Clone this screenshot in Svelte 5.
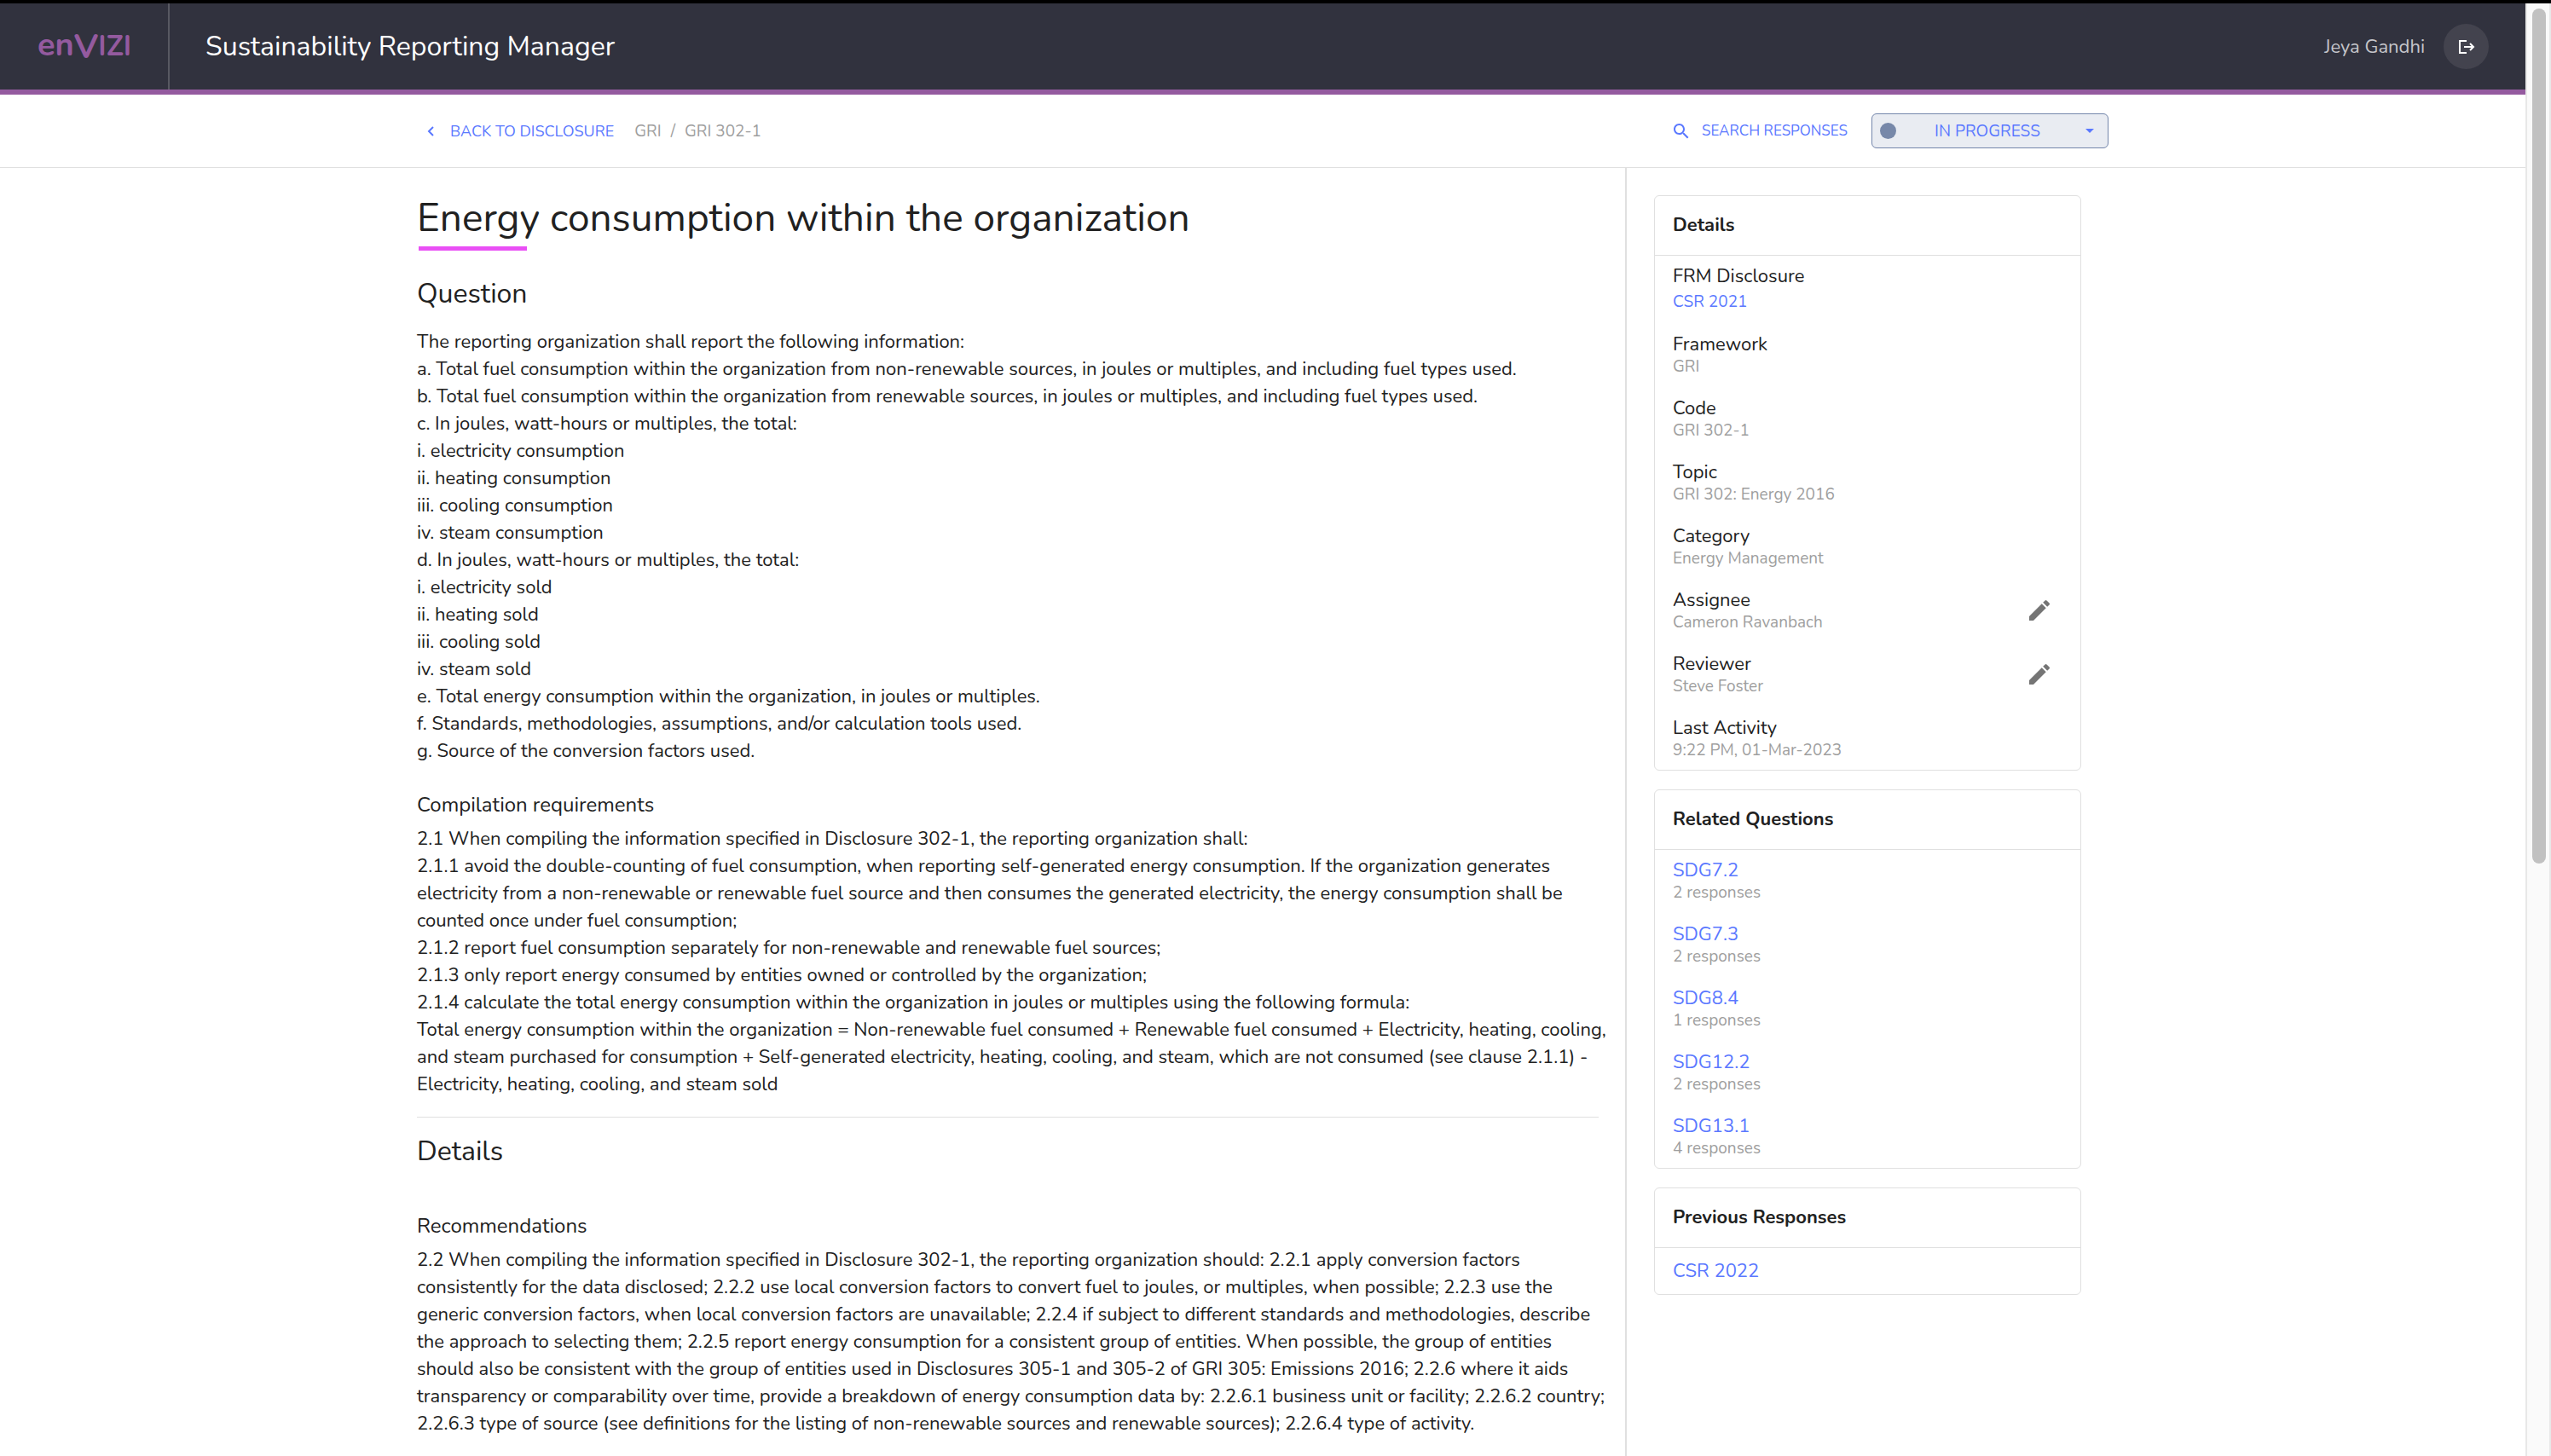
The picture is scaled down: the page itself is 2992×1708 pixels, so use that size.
<script>
  const question = `The reporting organization shall report the following information:
a. Total fuel consumption within the organization from non-renewable sources, in joules or multiples, and including fuel types used.
b. Total fuel consumption within the organization from renewable sources, in joules or multiples, and including fuel types used.
c. In joules, watt-hours or multiples, the total:
i. electricity consumption
ii. heating consumption
iii. cooling consumption
iv. steam consumption
d. In joules, watt-hours or multiples, the total:
i. electricity sold
ii. heating sold
iii. cooling sold
iv. steam sold
e. Total energy consumption within the organization, in joules or multiples.
f. Standards, methodologies, assumptions, and/or calculation tools used.
g. Source of the conversion factors used.`;

  const compilation = `2.1 When compiling the information specified in Disclosure 302-1, the reporting organization shall:
2.1.1 avoid the double-counting of fuel consumption, when reporting self-generated energy consumption. If the organization generates
electricity from a non-renewable or renewable fuel source and then consumes the generated electricity, the energy consumption shall be
counted once under fuel consumption;
2.1.2 report fuel consumption separately for non-renewable and renewable fuel sources;
2.1.3 only report energy consumed by entities owned or controlled by the organization;
2.1.4 calculate the total energy consumption within the organization in joules or multiples using the following formula:
Total energy consumption within the organization = Non-renewable fuel consumed + Renewable fuel consumed + Electricity, heating, cooling,
and steam purchased for consumption + Self-generated electricity, heating, cooling, and steam, which are not consumed (see clause 2.1.1) -
Electricity, heating, cooling, and steam sold`;

  const recommendations = `2.2 When compiling the information specified in Disclosure 302-1, the reporting organization should: 2.2.1 apply conversion factors
consistently for the data disclosed; 2.2.2 use local conversion factors to convert fuel to joules, or multiples, when possible; 2.2.3 use the
generic conversion factors, when local conversion factors are unavailable; 2.2.4 if subject to different standards and methodologies, describe
the approach to selecting them; 2.2.5 report energy consumption for a consistent group of entities. When possible, the group of entities
should also be consistent with the group of entities used in Disclosures 305-1 and 305-2 of GRI 305: Emissions 2016; 2.2.6 where it aids
transparency or comparability over time, provide a breakdown of energy consumption data by: 2.2.6.1 business unit or facility; 2.2.6.2 country;
2.2.6.3 type of source (see definitions for the listing of non-renewable sources and renewable sources); 2.2.6.4 type of activity.`;

  const details = [
    { label: 'FRM Disclosure', value: 'CSR 2021', link: true },
    { label: 'Framework', value: 'GRI' },
    { label: 'Code', value: 'GRI 302-1' },
    { label: 'Topic', value: 'GRI 302: Energy 2016' },
    { label: 'Category', value: 'Energy Management' },
    { label: 'Assignee', value: 'Cameron Ravanbach', editable: true },
    { label: 'Reviewer', value: 'Steve Foster', editable: true },
    { label: 'Last Activity', value: '9:22 PM, 01-Mar-2023' },
  ];

  const related = [
    { code: 'SDG7.2', count: 2 },
    { code: 'SDG7.3', count: 2 },
    { code: 'SDG8.4', count: 1 },
    { code: 'SDG12.2', count: 2 },
    { code: 'SDG13.1', count: 4 },
  ];

  let status = $state('IN PROGRESS');
</script>

<div class="app">
  <div class="frame">
    <div class="page">
      <header class="topbar">
        <a class="logo" href="#home" aria-label="Envizi home"><span class="lower">en</span><span class="vee">V</span><span class="caps">IZI</span></a>
        <span class="product">Sustainability Reporting Manager</span>
        <span class="user">Jeya Gandhi</span>
        <button class="logout" aria-label="Log out">
          <svg viewBox="0 0 20 20" width="20" height="20" fill="none" stroke="#fff" stroke-width="2">
            <path d="M10 3H2v14h8" />
            <path d="M7 10h11M14 6l4 4-4 4" />
          </svg>
        </button>
      </header>

      <div class="subbar">
        <div class="wrap actions">
          <a class="back" href="#disclosure">
            <svg viewBox="0 0 10 14" width="10" height="14" fill="none" stroke="currentColor" stroke-width="2"><path d="M8 2L3 7l5 5" /></svg>
            BACK TO DISCLOSURE
          </a>
          <nav class="crumbs" aria-label="Breadcrumb">
            <a href="#gri">GRI</a><span>/</span><a href="#gri-302-1">GRI 302-1</a>
          </nav>
          <button class="search">
            <svg viewBox="3 3 18 18" width="18" height="18" fill="currentColor"><path d="M15.5 14h-.79l-.28-.27C15.41 12.59 16 11.11 16 9.5 16 5.91 13.09 3 9.5 3S3 5.91 3 9.5 5.91 16 9.5 16c1.61 0 3.09-.59 4.23-1.57l.27.28v.79l5 4.99L20.49 19l-4.99-5zm-6 0C7.01 14 5 11.99 5 9.5S7.01 5 9.5 5 14 7.01 14 9.5 11.99 14 9.5 14z" /></svg>
            SEARCH RESPONSES
          </button>
          <div class="status">
            <span class="dot"></span>
            <select bind:value={status} aria-label="Status">
              <option>IN PROGRESS</option>
              <option>COMPLETE</option>
            </select>
            <svg class="caret" viewBox="0 0 10 5" width="10" height="5" fill="currentColor"><path d="M0 0h10L5 5z" /></svg>
          </div>
        </div>
      </div>

      <div class="wrap columns">
        <main>
          <h1>Energy consumption within the organization</h1>
          <h2>Question</h2>
          <p>{question}</p>
          <h3>Compilation requirements</h3>
          <p>{compilation}</p>
          <hr />
          <h2>Details</h2>
          <h3>Recommendations</h3>
          <p>{recommendations}</p>
        </main>

        <aside>
          <section>
            <h4>Details</h4>
            <dl>
              {#each details as item}
                <div class="item" class:linked={item.link}>
                  <dt>{item.label}</dt>
                  <dd>{#if item.link}<a href="#csr-2021">{item.value}</a>{:else}{item.value}{/if}</dd>
                  {#if item.editable}
                    <button class="edit" aria-label={`Edit ${item.label}`}>
                      <svg viewBox="0 0 24 24" width="32" height="32" fill="currentColor"><path d="M3 17.25V21h3.75L17.81 9.94l-3.75-3.75L3 17.25zM20.71 7.04c.39-.39.39-1.02 0-1.41l-2.34-2.34a.9959.9959 0 0 0-1.41 0l-1.83 1.83 3.75 3.75 1.83-1.83z" /></svg>
                    </button>
                  {/if}
                </div>
              {/each}
            </dl>
          </section>
          <section>
            <h4>Related Questions</h4>
            <ul>
              {#each related as item}
                <li class="item"><a class="code" href={`#${item.code}`}>{item.code}</a><span class="count">{item.count} responses</span></li>
              {/each}
            </ul>
          </section>
          <section>
            <h4>Previous Responses</h4>
            <a class="code single" href="#csr-2022">CSR 2022</a>
          </section>
        </aside>
      </div>
    </div>
    <div class="scrollbar" aria-hidden="true"><div class="thumb"></div></div>
  </div>
</div>

<style>
  :global(body) {
    margin: 0;
    overflow: hidden;
  }
  .app {
    box-sizing: border-box;
    height: 100vh;
    border-top: 4px solid #000;
    background: #fff;
    color: #212121;
    font-family: Nunito, Lato, sans-serif;
    font-size: 22px;
    line-height: 32px;
    overflow: hidden;
  }
  .frame {
    display: flex;
    height: 100%;
  }
  .page {
    flex: 1;
    min-width: 0;
    display: flex;
    flex-direction: column;
    overflow: hidden;
  }
  a {
    color: #5a78ff;
    text-decoration: none;
  }
  button {
    border: 0;
    padding: 0;
    background: none;
    font: inherit;
    cursor: pointer;
  }
  svg {
    display: block;
    flex: none;
  }
  h1, h2, h3, h4, p, dl, dd, ul {
    margin: 0;
    padding: 0;
    font-weight: 400;
  }
  ul {
    list-style: none;
  }

  .topbar {
    flex: none;
    display: flex;
    align-items: center;
    height: 101px;
    border-bottom: 6px solid #945a9f;
    background: #31323e;
    color: #fff;
  }
  .logo {
    box-sizing: border-box;
    display: flex;
    align-items: center;
    align-self: stretch;
    width: 199px;
    padding-left: 44px;
    border-right: 2px solid #585962;
    color: #945a9f;
    font-weight: 700;
    white-space: nowrap;
  }
  .lower {
    padding-bottom: 4px;
    font-size: 38px;
  }
  .vee {
    font-size: 40px;
  }
  .caps {
    font-size: 33px;
  }
  .product {
    margin-left: 42px;
    font-size: 32px;
  }
  .user {
    margin-left: auto;
    color: #c5c5ca;
    font-size: 22px;
  }
  .logout {
    display: grid;
    place-items: center;
    width: 53px;
    height: 53px;
    margin: 0 43px 0 22px;
    border-radius: 50%;
    background: #43434e;
  }

  .wrap {
    box-sizing: border-box;
    width: 100%;
    max-width: 1984px;
    margin: 0 auto;
  }
  .subbar {
    flex: none;
    border-bottom: 1px solid #e0e0e0;
  }
  .actions {
    display: flex;
    align-items: center;
    height: 85px;
    font-size: 19px;
  }
  .back {
    display: flex;
    align-items: center;
    gap: 18px;
    padding-left: 11px;
    font-size: 18px;
  }
  .crumbs {
    display: flex;
    gap: 11px;
    margin-left: 24px;
    color: #9e9e9e;
  }
  .crumbs a {
    color: inherit;
  }
  .search {
    display: flex;
    align-items: center;
    gap: 15px;
    margin-left: auto;
    color: #5a78ff;
    font-size: 17px;
  }
  .status {
    position: relative;
    width: 278px;
    margin-left: 28px;
    color: #5a78ff;
  }
  select {
    box-sizing: border-box;
    display: block;
    width: 100%;
    height: 41px;
    padding: 0 28px 0 22px;
    appearance: none;
    border: 1px solid #7486ab;
    border-radius: 6px;
    background: #e9ecf2;
    color: inherit;
    font: inherit;
    text-align: center;
    text-align-last: center;
  }
  .dot {
    position: absolute;
    left: 10px;
    top: 11px;
    width: 19px;
    height: 19px;
    border-radius: 50%;
    background: #7788a9;
  }
  .caret {
    position: absolute;
    right: 17px;
    top: 18px;
  }

  .columns {
    flex: 1;
    min-height: 0;
    display: flex;
  }
  main {
    flex: 1;
    min-width: 0;
    padding: 27px 16px 0 0;
    border-right: 2px solid #e0e0e0;
  }
  h1 {
    position: relative;
    padding-bottom: 6px;
    font-size: 46px;
    line-height: 64px;
  }
  h1::after {
    content: "";
    position: absolute;
    left: 2px;
    bottom: 0;
    width: 127px;
    height: 5px;
    background: #e94ff5;
  }
  h2 {
    padding: 27px 0 16px;
    font-size: 32px;
    line-height: 48px;
  }
  hr + h2 {
    padding-top: 16px;
  }
  h3 {
    padding: 27px 0 4px;
    font-size: 24px;
    line-height: 40px;
  }
  p {
    white-space: pre-line;
  }
  hr {
    height: 1px;
    margin: 22px 15px 0 0;
    border: 0;
    background: #e0e0e0;
  }

  aside {
    display: flex;
    flex-direction: column;
    gap: 22px;
    width: 501px;
    padding: 32px 32px 0 32px;
  }
  section {
    border: 1px solid #e0e0e0;
    border-radius: 6px;
  }
  h4 {
    padding: 0 21px;
    border-bottom: 1px solid #e0e0e0;
    font-size: 22px;
    font-weight: 700;
    line-height: 69px;
  }
  dl, ul {
    padding: 9px 21px 5px;
  }
  .item {
    position: relative;
    height: 59px;
    margin-bottom: 16px;
    line-height: 30px;
  }
  .item:last-child {
    margin-bottom: 0;
  }
  .linked {
    height: 64px;
  }
  dt, .code {
    display: block;
    font-size: 22px;
    line-height: 30px;
  }
  dd, .count {
    display: block;
    color: #9e9e9e;
    font-size: 19px;
    line-height: 22px;
  }
  .linked dd {
    line-height: 30px;
  }
  .single {
    padding: 12px 21px;
  }
  .edit {
    position: absolute;
    right: 11px;
    top: 11px;
    color: #757575;
  }

  .scrollbar {
    box-sizing: border-box;
    width: 30px;
    padding: 6px 4px 0 6px;
    border: solid #e8e8e8;
    border-width: 0 2px;
    background: #fafafa;
  }
  .thumb {
    height: 1003px;
    border-radius: 8px;
    background: #c1c1c1;
  }
</style>
